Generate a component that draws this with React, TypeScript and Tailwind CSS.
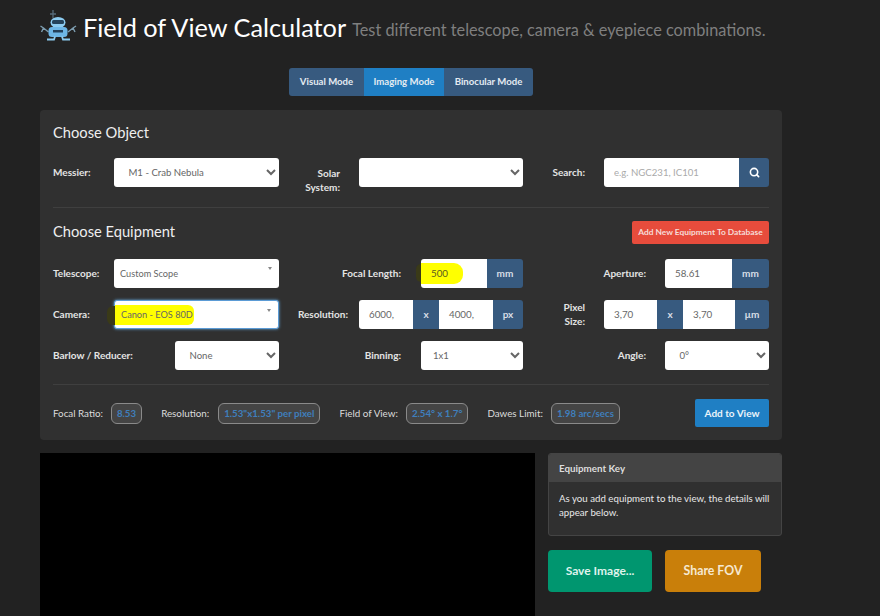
import React from 'react';
import { Search } from 'lucide-react';

const selectCls =
  "h-[29px] rounded-[3px] bg-white pl-[8px] pr-0 text-[9.6px] text-[#666] outline-none";
const inputCls =
  "flex h-[29px] items-center bg-white pl-[10px] text-[9.8px] text-[#666]";
const addonCls =
  "flex h-[29px] items-center justify-center bg-[#375a7f] text-[10px] font-bold text-[#d8dee6]";

const Label: React.FC<{ width: string; children: React.ReactNode; left?: boolean; className?: string }> = ({ width, children, left, className }) => (
  <div className={`${width} shrink-0 text-[10px] font-bold leading-[14px] text-[#e4e4e4] ${left ? 'text-left' : 'text-right'} ${className ?? '-translate-y-[1px]'}`}>
    {children}
  </div>
);

const Combo: React.FC<{ text: string; highlight?: boolean }> = ({ text, highlight }) => (
  <div
    className={`relative flex h-[29px] w-[165px] items-center rounded-[3px] bg-white pl-[6px] text-[9.2px] text-[#666] ${
      highlight ? 'border border-[#5b9bd5] shadow-[0_0_3px_#66afe9]' : ''
    }`}
  >
    {highlight && (
      <>
        <div className="absolute top-[5px] -left-[8px] h-[19px] w-[8px] rounded-l-[6px] bg-[#3a3a18]" />
        <div className="absolute top-[4px] left-0 h-[20px] w-[79px] rounded-r-[6px] bg-[#ffff00]" />
      </>
    )}
    <span className="relative">{text}</span>
    <div className="absolute top-[8px] right-[7px] h-0 w-0 border-x-[2.5px] border-t-[3px] border-x-transparent border-t-[#888]" />
  </div>
);

const Stat: React.FC<{ label: string; value: string; labelCls: string }> = ({ label, value, labelCls }) => (
  <div className="flex items-center">
    <span className={`${labelCls} text-[9.8px] whitespace-nowrap text-[#dcdcdc]`}>{label}</span>
    <span className="flex h-[21px] items-center rounded-[6px] border border-[#8a8a8a] bg-[#444] px-[5px] text-[9.7px] font-bold whitespace-nowrap text-[#3f7fbd]">
      {value}
    </span>
  </div>
);

const Logo = () => (
  <svg width="37" height="31" viewBox="0 0 37 31" className="shrink-0">
    <path d="M13 0v8M10 4h6" stroke="#566b7a" strokeWidth="1.3" />
    <path d="M0.5 16l3 2 5 4M3.5 18l-2 4M36 16l-3 2-5 4M33 18l2 4" stroke="#7d9db0" strokeWidth="1.4" fill="none" />
    <ellipse cx="18" cy="12.5" rx="7.5" ry="5.5" fill="#8ccbf0" />
    <rect x="12" y="10" width="12" height="4" rx="1.5" fill="#24425a" />
    <rect x="8.5" y="17" width="19" height="10" rx="3.5" fill="#6db6e6" />
    <rect x="13" y="20" width="10" height="2.5" fill="#23405a" />
    <path d="M7 29.5h7l1-3M30 29.5h-7l-1-3" stroke="#8ccbf0" strokeWidth="1.8" fill="none" />
  </svg>
);

export default function App() {
  return (
    <div className="h-[616px] w-[880px] overflow-hidden bg-[#222] font-['Lato','Open_Sans',sans-serif]">
      <header className="flex h-[68px] items-start pt-[10px] pl-[40px]">
        <Logo />
        <h1 className="ml-[6px] text-[25.3px] leading-[34px] whitespace-nowrap text-white">Field of View Calculator</h1>
        <span className="mt-[8px] ml-[6px] text-[16.3px] leading-[24px] whitespace-nowrap text-[#7f7f7f]">
          Test different telescope, camera &amp; eyepiece combinations.
        </span>
      </header>

      <div className="ml-[289px] flex h-[28px] w-[244px] overflow-hidden rounded-[3px] bg-[#375a7f] text-[9.6px] font-bold text-[#e4ebf2]">
        <div className="flex w-[75px] items-center justify-center">Visual Mode</div>
        <div className="flex w-[80px] items-center justify-center bg-[#1f7fc4]">Imaging Mode</div>
        <div className="flex flex-1 items-center justify-center">Binocular Mode</div>
      </div>

      <section className="mt-[14px] ml-[40px] h-[330px] w-[742px] rounded-[4px] bg-[#303030] px-[13px] pt-[12px]">
        <h2 className="text-[14.7px] leading-[20px] text-[#eee]">Choose Object</h2>

        <div className="mt-[16px] grid grid-cols-[226px_228px_226px] items-center gap-x-[18px]">
          <div className="flex items-center">
            <Label width="w-[61px]" left>Messier:</Label>
            <select className={`${selectCls} w-[165px]`} defaultValue="m1">
              <option value="m1">&nbsp;M1 - Crab Nebula</option>
            </select>
          </div>
          <div className="flex items-center">
            <Label width="w-[43px]" className="translate-y-[7px]">Solar System:</Label>
            <select className={`${selectCls} ml-[19px] w-[164px]`} />
          </div>
          <div className="flex items-center">
            <Label width="w-[42px]">Search:</Label>
            <div className="ml-[19px] flex">
              <input
                placeholder="e.g. NGC231, IC101"
                className="h-[29px] w-[135px] rounded-l-[3px] bg-white pl-[10px] text-[9.6px] text-[#666] outline-none placeholder:text-[#aaa]"
              />
              <div className={`${addonCls} w-[30px] rounded-r-[3px]`}>
                <Search size={11} strokeWidth={3.5} className="text-white" />
              </div>
            </div>
          </div>
        </div>

        <hr className="mt-[20px] border-t border-[#3f3f3f]" />

        <div className="mt-[13px] flex h-[23px] items-center justify-between">
          <h2 className="mb-[4px] text-[14.7px] leading-[20px] text-[#eee]">Choose Equipment</h2>
          <div className="flex h-[23px] w-[137px] items-center justify-center rounded-[2px] bg-[#e74c3c] text-[8.4px] font-bold whitespace-nowrap text-[#f6dcd8]">
            Add New Equipment To Database
          </div>
        </div>

        <div className="mt-[15px] grid grid-cols-[226px_228px_226px] items-center gap-x-[18px] gap-y-[12px]">
          <div className="flex items-center">
            <Label width="w-[61px]" left>Telescope:</Label>
            <Combo text="Custom Scope" />
          </div>
          <div className="flex items-center">
            <Label width="w-[104px]">Focal Length:</Label>
            <div className="relative ml-[20px] flex">
              <div className="absolute top-[5px] -left-[5px] h-[18px] w-[5px] rounded-l-[5px] bg-[#3a3a18]" />
              <div className={`${inputCls} w-[66px] rounded-l-[3px]`}>
                <div className="absolute top-[4px] left-0 h-[21px] w-[42px] rounded-r-[9px] bg-[#ffff00]" />
                <span className="relative text-[#5a5a20]">500</span>
              </div>
              <div className={`${addonCls} w-[36px] rounded-r-[3px]`}>mm</div>
            </div>
          </div>
          <div className="flex items-center">
            <Label width="w-[103px]">Aperture:</Label>
            <div className="ml-[19px] flex">
              <div className={`${inputCls} w-[67px] rounded-l-[3px]`}>58.61</div>
              <div className={`${addonCls} w-[37px] rounded-r-[3px]`}>mm</div>
            </div>
          </div>

          <div className="flex items-center">
            <Label width="w-[61px]" left>Camera:</Label>
            <Combo text="Canon - EOS 80D" highlight />
          </div>
          <div className="flex items-center">
            <Label width="w-[51px]">Resolution:</Label>
            <div className="ml-[11px] flex">
              <div className={`${inputCls} w-[54px] rounded-l-[3px]`}>6000,</div>
              <div className={`${addonCls} w-[26px]`}>x</div>
              <div className={`${inputCls} w-[54px]`}>4000,</div>
              <div className={`${addonCls} w-[30px] rounded-r-[3px]`}>px</div>
            </div>
          </div>
          <div className="flex items-center">
            <Label width="w-[42px]">Pixel Size:</Label>
            <div className="ml-[19px] flex">
              <div className={`${inputCls} w-[53px] rounded-l-[3px]`}>3,70</div>
              <div className={`${addonCls} w-[26px]`}>x</div>
              <div className={`${inputCls} w-[52px]`}>3,70</div>
              <div className={`${addonCls} w-[34px] rounded-r-[3px]`}>µm</div>
            </div>
          </div>

          <div className="flex items-center">
            <Label width="w-[122px]" left>Barlow / Reducer:</Label>
            <select className={`${selectCls} w-[104px]`} defaultValue="none">
              <option value="none">&nbsp;None</option>
            </select>
          </div>
          <div className="flex items-center">
            <Label width="w-[104px]">Binning:</Label>
            <select className={`${selectCls} ml-[20px] w-[102px]`} defaultValue="1">
              <option value="1">1x1</option>
            </select>
          </div>
          <div className="flex items-center">
            <Label width="w-[103px]">Angle:</Label>
            <select className={`${selectCls} ml-[19px] w-[104px]`} defaultValue="0">
              <option value="0">&nbsp;0°</option>
            </select>
          </div>
        </div>

        <hr className="mt-[14px] border-t border-[#3f3f3f]" />

        <div className="mt-[14px] flex h-[28px] items-center">
          <Stat label="Focal Ratio:" value="8.53" labelCls="mr-[8px]" />
          <div className="w-[19px]" />
          <Stat label="Resolution:" value="1.53&quot;x1.53&quot; per pixel" labelCls="mr-[9px]" />
          <div className="w-[19px]" />
          <Stat label="Field of View:" value="2.54° x 1.7°" labelCls="mr-[8px]" />
          <div className="w-[19px]" />
          <Stat label="Dawes Limit:" value="1.98 arc/secs" labelCls="mr-[8px]" />
          <div className="ml-auto flex h-[28px] w-[74px] items-center justify-center rounded-[2px] bg-[#1f7fc4] text-[10px] font-bold text-[#eaf3fa]">
            Add to View
          </div>
        </div>
      </section>

      <div className="mt-[13px] ml-[40px] flex items-start">
        <div className="h-[200px] w-[495px] bg-black" />
        <div className="ml-[13px] w-[234px]">
          <div className="h-[83px] overflow-hidden rounded-[3px] border border-[#444] bg-[#303030]">
            <div className="flex h-[28px] items-center bg-[#444] px-[10px] text-[9.8px] font-bold text-[#ddd]">Equipment Key</div>
            <p className="px-[10px] pt-[9px] text-[9.7px] leading-[14px] text-[#e8e8e8]">
              As you add equipment to the view, the details will appear below.
            </p>
          </div>
          <div className="mt-[14px] flex gap-[13px]">
            <div className="flex h-[42px] w-[104px] items-center justify-center rounded-[4px] bg-[#00966f] text-[12px] font-bold text-[#dff3ec]">
              Save Image...
            </div>
            <div className="flex h-[42px] w-[96px] items-center justify-center rounded-[4px] bg-[#c97f0a] text-[12.3px] font-bold text-[#f6e8d0]">
              Share FOV
            </div>
          </div>
        </div>
      </div>
    </div>
  );
}
